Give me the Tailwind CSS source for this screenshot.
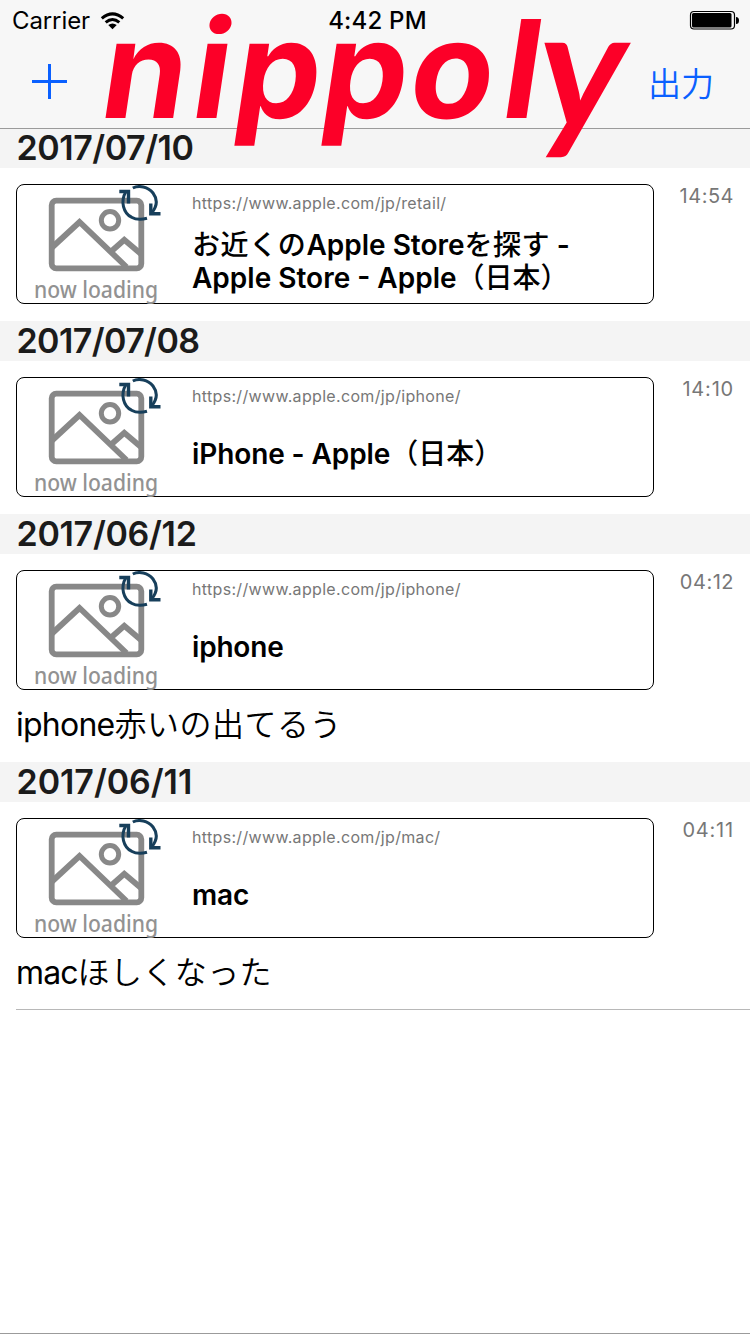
<!DOCTYPE html>
<html lang="ja">
<head>
<meta charset="utf-8">
<title>nippoly</title>
<script src="https://cdn.jsdelivr.net/npm/@tailwindcss/browser@4"></script>
</head>
<body class="bg-white text-black font-['Inter','Noto_Sans_CJK_JP',sans-serif]">
<svg class="hidden">
  <symbol id="loading" viewBox="0 0 160 118">
    <g fill="none" stroke="#888" stroke-width="5.8">
      <rect x="34.7" y="15.7" width="89.6" height="67.6" rx="4.5"/>
      <path d="M35 62.500L62.500 37L109.500 82M93 67.500L107.300 54.800L124 69"/>
      <circle cx="93" cy="35.300" r="8.700" stroke-width="5"/>
    </g>
    <g fill="none" stroke="#173f5b" stroke-width="3">
      <path d="M109 6.500C103 16.500 106.500 28 114.500 32.200C118.500 34.500 124 35 130 33.300"/>
      <path d="M115.800 3C122 0 131 1.500 136 8C140.500 14 140.500 21 134.500 28"/>
      <path d="M102.300 6.500H111.500V18.500M133.800 18.500V28.800H143.500" stroke-width="3.400"/>
    </g>
  </symbol>
</svg>
<main class="relative flex h-[1334px] w-[750px] flex-col overflow-hidden border-b border-[#9b9b9b]">
  <header class="flex h-[129px] shrink-0 flex-col border-b border-[#9b9b9b] bg-[#f7f7f7]">
    <div class="grid h-[41px] grid-cols-3 items-center pr-[11px] pl-3 text-2xl leading-[41px]">
      <div class="flex items-center gap-[10px]">
        <span class="tracking-[-0.1px]">Carrier</span>
        <svg class="h-[18px] w-[25px]" viewBox="0 0 26 19" fill="none" stroke="#000" stroke-width="3.200"><path d="M1.700 6.800Q13 -3 24.300 6.800M5.800 11Q13 4.800 20.200 11"/><path d="M13 18.300L8.500 13.800Q13 10.300 17.500 13.800Z" fill="#000" stroke="none"/></svg>
      </div>
      <span class="pl-1 text-center font-medium tracking-[0.2px]">4:42 PM</span>
      <svg class="-mt-px h-5 w-[50px] justify-self-end" viewBox="0 0 50 20"><rect x="1.500" y="1.500" width="44" height="17.500" rx="3.500" fill="none" stroke="#000" stroke-width="1.200"/><rect x="3" y="3" width="39.500" height="14.500" rx="1.500"/><path d="M47 7Q50 7 50 10.500T47 14Z"/></svg>
    </div>
    <div class="flex h-[82px] items-center justify-between pr-9 pl-8 text-[#0a60ff]">
      <svg class="-mt-px h-[35px] w-[35px]" viewBox="0 0 35 35" stroke="#0a60ff" stroke-width="3"><path d="M0 17.500H35M17.500 0V35"/></svg>
      <span class="pt-[6px] text-[33px] font-[350]">出力</span>
    </div>
  </header>
  <svg class="absolute top-0 left-0 h-[170px] w-[750px] font-['Inter',sans-serif] font-[650]" viewBox="0 0 750 170" fill="#fc0028"><text transform="translate(0 118) skewX(-8.500)" font-size="136" x="97 188 230 317 405 498">nippol</text><text class="font-['Lato',sans-serif] font-bold" transform="translate(531 129) skewX(-8.500) scale(1.1 1.120)" font-size="150">y</text></svg>

  <section>
    <h2 class="h-[39px] bg-[#f4f4f4] pl-[16.5px] text-[34px] leading-[37px] font-semibold tracking-[-0.45px] text-[#1b1b1b]">2017/07/10</h2>
    <div class="flex h-[153px] justify-between pt-4 pr-4 pl-4">
      <a class="flex h-[120px] w-[638px] rounded-lg border border-black">
        <svg class="h-[118px] w-[160px] overflow-visible" viewBox="0 0 160 118"><use href="#loading"/><text class="font-['Noto_Sans',sans-serif] font-medium" x="17" y="113" font-size="23" fill="#929292" textLength="124" lengthAdjust="spacingAndGlyphs">now loading</text></svg>
        <div class="flex flex-1 flex-col pt-2 pl-[15px]">
          <span class="h-5 text-base leading-5 tracking-[0.33px] text-[#777]">https://www.apple.com/jp/retail/</span>
          <div class="flex flex-1 flex-col justify-center pt-[7px] text-[28px] leading-[33px] font-semibold"><span><span class="font-medium tracking-[0.6px]">お近くの</span>Apple Store<span class="font-medium tracking-[0.4px]">を探す</span> -</span><span>Apple Store - Apple<span class="font-medium">（日本）</span></span></div>
        </div>
      </a>
      <time class="text-xl leading-6 tracking-[0.5px] text-[#777]">14:54</time>
    </div>
  </section>

  <section>
    <h2 class="h-10 bg-[#f4f4f4] pl-[16.5px] text-[34px] leading-[39px] font-semibold tracking-[-0.6px] text-[#1b1b1b]">2017/07/08</h2>
    <div class="flex h-[153px] justify-between pt-4 pr-4 pl-4">
      <a class="flex h-[120px] w-[638px] rounded-lg border border-black">
        <svg class="h-[118px] w-[160px] overflow-visible" viewBox="0 0 160 118"><use href="#loading"/><text class="font-['Noto_Sans',sans-serif] font-medium" x="17" y="113" font-size="23" fill="#929292" textLength="124" lengthAdjust="spacingAndGlyphs">now loading</text></svg>
        <div class="flex flex-1 flex-col pt-2 pl-[15px]">
          <span class="h-5 text-base leading-5 tracking-[0.33px] text-[#777]">https://www.apple.com/jp/iphone/</span>
          <div class="flex flex-1 flex-col justify-center pt-[6px] text-[28px] leading-[33px] font-semibold"><span><span class="tracking-[-0.1px]">iPhone - Apple</span><span class="font-medium">（日本）</span></span></div>
        </div>
      </a>
      <time class="text-xl leading-6 tracking-[0.8px] text-[#777]">14:10</time>
    </div>
  </section>

  <section>
    <h2 class="h-10 bg-[#f4f4f4] pl-[16.5px] text-[34px] leading-[39px] font-semibold tracking-[-0.3px] text-[#1b1b1b]">2017/06/12</h2>
    <div class="flex h-[136px] justify-between pt-4 pr-4 pl-4">
      <a class="flex h-[120px] w-[638px] rounded-lg border border-black">
        <svg class="h-[118px] w-[160px] overflow-visible" viewBox="0 0 160 118"><use href="#loading"/><text class="font-['Noto_Sans',sans-serif] font-medium" x="17" y="113" font-size="23" fill="#929292" textLength="124" lengthAdjust="spacingAndGlyphs">now loading</text></svg>
        <div class="flex flex-1 flex-col pt-2 pl-[15px]">
          <span class="h-5 text-base leading-5 tracking-[0.33px] text-[#777]">https://www.apple.com/jp/iphone/</span>
          <div class="flex flex-1 flex-col justify-center pt-[6px] text-[28px] leading-[33px] font-semibold tracking-[-0.2px]"><span>iphone</span></div>
        </div>
      </a>
      <time class="text-xl leading-6 tracking-[0.5px] text-[#777]">04:12</time>
    </div>
    <p class="h-[72px] pl-4 text-[32px] leading-[70px]"><span class="tracking-[-0.75px]">iphone</span><span class="font-[350] tracking-[0.5px]">赤いの出てるう</span></p>
  </section>

  <section>
    <h2 class="h-10 bg-[#f4f4f4] pl-[16.5px] text-[34px] leading-[39px] font-semibold tracking-[-0.05px] text-[#1b1b1b]">2017/06/11</h2>
    <div class="flex h-[136px] justify-between pt-4 pr-4 pl-4">
      <a class="flex h-[120px] w-[638px] rounded-lg border border-black">
        <svg class="h-[118px] w-[160px] overflow-visible" viewBox="0 0 160 118"><use href="#loading"/><text class="font-['Noto_Sans',sans-serif] font-medium" x="17" y="113" font-size="23" fill="#929292" textLength="124" lengthAdjust="spacingAndGlyphs">now loading</text></svg>
        <div class="flex flex-1 flex-col pt-2 pl-[15px]">
          <span class="h-5 text-base leading-5 tracking-[0.33px] text-[#777]">https://www.apple.com/jp/mac/</span>
          <div class="flex flex-1 flex-col justify-center pt-[6px] text-[28px] leading-[33px] font-semibold tracking-[-0.2px]"><span>mac</span></div>
        </div>
      </a>
      <time class="text-xl leading-6 tracking-[0.8px] text-[#777]">04:11</time>
    </div>
    <p class="ml-4 h-[72px] border-b border-[#b8b8b8] text-[32px] leading-[70px]"><span class="tracking-[-0.9px]">mac</span><span class="font-[350] tracking-[0.4px]">ほしくなった</span></p>
  </section>
</main>
</body>
</html>
